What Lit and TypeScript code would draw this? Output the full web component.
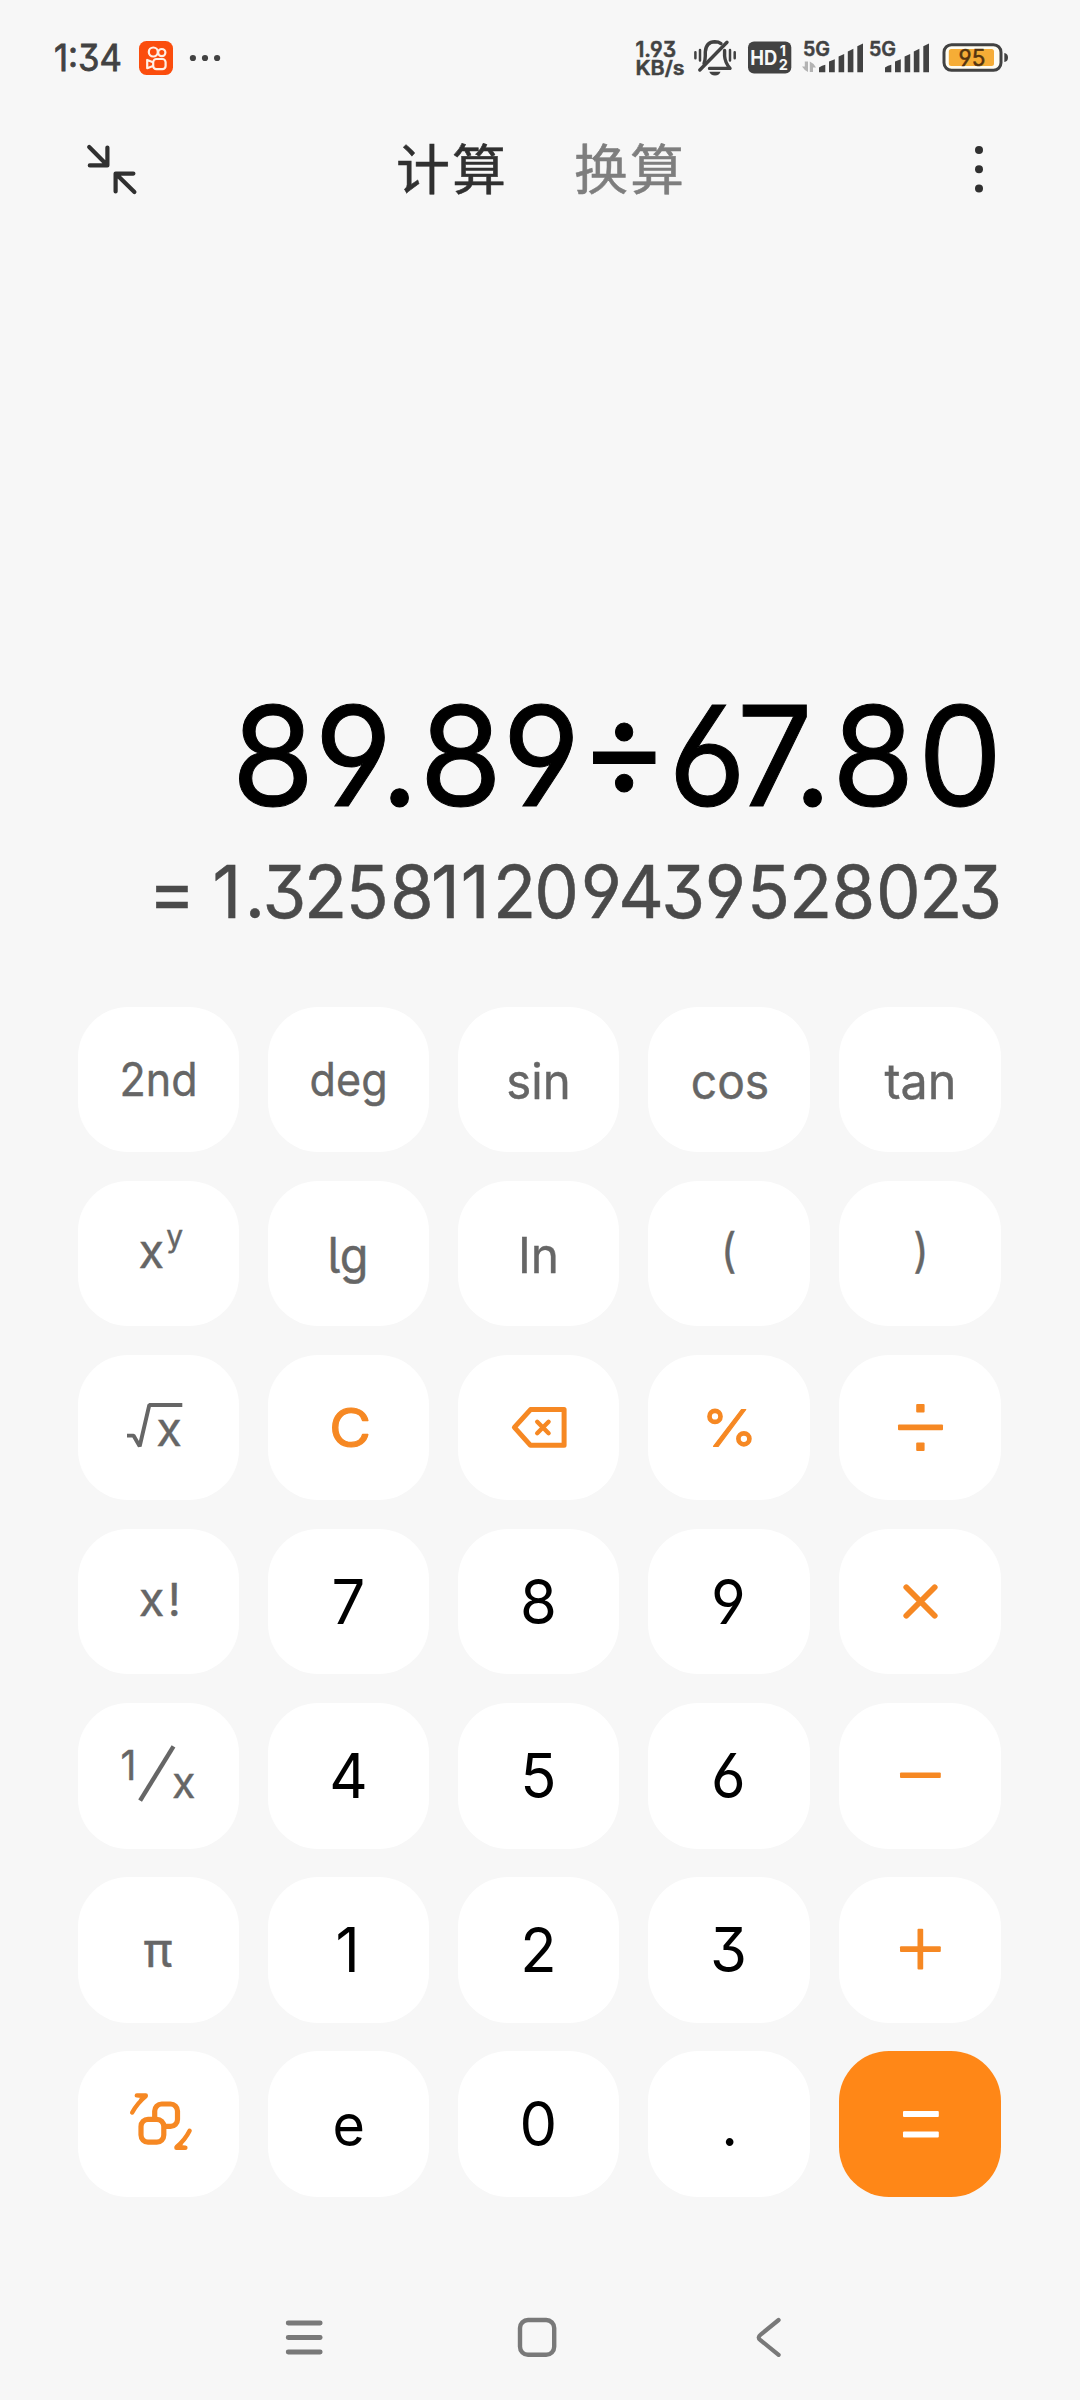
import { LitElement, html, svg, css } from "lit";
import { customElement } from "lit/decorators.js";
import { classMap } from "lit/directives/class-map.js";

/* A piece of centred key text; `w` fixes the drawn width, `sx` scales single glyphs sideways. */
const word = (t: string, size: number, y: number, w: number, x = 80.6) =>
  svg`<text class="ink" x=${x} y=${y} font-size=${size} textLength=${w} lengthAdjust="spacingAndGlyphs" text-anchor="middle">${t}</text>`;
const glyph = (t: string, size: number, y: number, x = 80.6, sx = 1) =>
  svg`<text class="ink" transform="translate(${x} ${y}) scale(${sx} 1)" font-size=${size} text-anchor="middle">${t}</text>`;
const digit = (t: string) => glyph(t, 61.5, 94.8, t === "1" ? 79.6 : 80.4, 0.97);

interface Key { name: string; kind: "fn" | "num" | "op" | "eq"; art: unknown; }

const fn = (name: string, art: unknown): Key => ({ name, kind: "fn", art });
const num = (name: string): Key => ({ name, kind: "num", art: digit(name) });
const op = (name: string, art: unknown): Key => ({ name, kind: "op", art });

const KEYS: Key[] = [
  fn("2nd", word("2nd", 46, 89, 78)),
  fn("deg", word("deg", 46, 89, 78)),
  fn("sin", word("sin", 49, 91.6, 64.5, 80.4)),
  fn("cos", word("cos", 49, 91.6, 78.5, 82)),
  fn("tan", word("tan", 49, 91.6, 72, 81.5)),

  fn("power", svg`${glyph("x", 47, 86.5, 73.3)}${glyph("y", 30, 65.6, 96.7)}`),
  fn("lg", word("lg", 49, 91.9, 41, 80)),
  fn("In", word("In", 49, 91.9, 41, 80.4)),
  fn("(", glyph("(", 47, 86, 80.8, 0.9)),
  fn(")", glyph(")", 47, 86, 82, 0.9)),

  fn("square root", svg`<path class="line" stroke-width="3.9" stroke-linejoin="bevel" d="M49 80.6H55.5L61.7 91.3 71.3 50H104.3"/>${glyph("x", 47, 90.8, 91)}`),
  op("clear", svg`<text transform="translate(82.2 91.9) scale(1.06 1)" font-size="54" text-anchor="middle" stroke="currentColor" stroke-width="1.2" stroke-linejoin="round">C</text>`),
  op("delete", svg`<g class="line" transform="translate(1 0)" stroke-linejoin="round" stroke-linecap="round"><path stroke-width="5" d="M71.5 54.6H105.1V90.3H71.5L55.4 72.4Z"/><path stroke-width="4.4" d="M78.2 66.8 89.6 78.2M89.6 66.8 78.2 78.2"/></g>`),
  op("percent", svg`<g class="line" transform="translate(1.2 0)"><circle cx="65.8" cy="61.4" r="5.5" stroke-width="4.7"/><circle cx="94.7" cy="83.8" r="5.5" stroke-width="4.7"/><path d="M92.3 54.5H96.6L69 91.3H64.3Z" fill="currentColor" stroke-width="1.2" stroke-linejoin="round"/></g>`),
  op("divide", svg`<g transform="translate(.5 0)"><rect x="58.5" y="69.5" width="45" height="5.8" rx="1"/><rect x="76.7" y="49" width="8.4" height="8.4" rx="1"/><rect x="76.7" y="87.6" width="8.4" height="8.4" rx="1"/></g>`),

  fn("factorial", svg`${glyph("x", 47, 86.7, 73.7)}${glyph("!", 45.5, 86.7, 96.2)}`),
  num("7"), num("8"), num("9"),
  op("multiply", svg`<path class="line" transform="translate(.5 0)" stroke-width="5.8" stroke-linecap="round" d="M66.8 58.3 95.2 86.7M95.2 58.3 66.8 86.7"/>`),

  fn("reciprocal", svg`${glyph("1", 41, 76.9, 50.4, 0.95)}<path class="line" stroke-width="4.4" d="M62.1 97.6 95.5 43.4"/>${glyph("x", 43, 94.6, 105.7)}`),
  num("4"), num("5"), num("6"),
  op("minus", svg`<rect x="61" y="69.4" width="40.8" height="5.7" rx="1"/>`),

  fn("pi", glyph("π", 47, 90, 80.1, 1.02)),
  num("1"), num("2"), num("3"),
  op("plus", svg`<rect x="61" y="69.3" width="40.8" height="5.7" rx="1"/><rect x="78.5" y="51.8" width="5.7" height="40.8" rx="1"/>`),

  op("switch layout", svg`<g class="line" stroke-width="5.2" stroke-linecap="round" stroke-linejoin="round">
    <rect x="63" y="68.4" width="22.8" height="22.7" rx="7"/>
    <path stroke-linecap="butt" d="M76.7 68V60a7 7 0 0 1 7-7h8.8a7 7 0 0 1 7 7v8.4a7 7 0 0 1-7 7H87"/>
    <path stroke-width="4.4" d="M54.2 61.5Q59.5 52 67.6 45.4L58.8 44.4H67.8L63 49"/>
    <path stroke-width="4.4" d="M111.6 79.8Q107 89 98.6 96L107.4 96.8H98.4L103 92.4"/></g>`),
  { name: "e", kind: "num", art: glyph("e", 58, 95.2, 80.6, 0.96) },
  num("0"),
  { name: ".", kind: "num", art: glyph(".", 61.5, 95.2, 81.6, 0.95) },
  { name: "equals", kind: "eq", art: svg`<rect x="64" y="60.1" width="35.8" height="6" rx="1"/><rect x="64" y="80.4" width="35.8" height="6" rx="1"/>` },
];

const EXPRESSION = "89.89÷67.80";
const EXPRESSION_X = [273, 353.3, 399.5, 460.7, 541.2, 624.3, 707.4, 774.7, 812.6, 873.4, 960.1];
/* The operator sits on the middle of the digits, a little above its default place. */
const EXPRESSION_Y = [...EXPRESSION].map((c) => (c === "÷" ? 796.6 : 805.6)).join(" ");
const RESULT = "1.325811209439528023";
const RESULT_X = [227, 255, 284.5, 325.5, 367.3, 411.9, 445.4, 475.2, 514.6, 556.7, 601.3, 641.1, 683.2, 725.3, 768.5, 810.6, 853.5, 898.4, 940.8, 980.1];
const STRETCH = 0.97;
const spread = (xs: number[]) => xs.map((x) => (x / STRETCH).toFixed(2)).join(" ");

const signal = (x: number) => svg`
  <path d="M${x} 72.3V67.5Q${x + 3} 65.2 ${x + 6.3} 64.8V72.3Z"/>
  <path d="M${x + 10} 72.3V61.5L${x + 15.8} 59.3V72.3Z"/>
  <path d="M${x + 19.6} 72.3V56.5L${x + 25.2} 54V72.3Z"/>
  <path d="M${x + 28.8} 72.3V51.4L${x + 34.4} 48.8V72.3Z"/>
  <path d="M${x + 38.3} 72.3V46.3L${x + 44} 43.6V72.3Z"/>`;

@customElement("app-root")
class AppRoot extends LitElement {
  static styles = css`
    :host {
      display: block;
      font-family: Inter, "Noto Sans CJK SC", sans-serif;
      font-feature-settings: "cv03", "cv04", "cv05", "cv09";
    }
    .screen {
      width: 1080px;
      height: 2400px;
      display: flex;
      flex-direction: column;
      background: #f7f7f7;
      overflow: hidden;
    }
    svg {
      display: block;
      flex: none;
      overflow: visible;
      fill: currentColor;
    }
    .line {
      fill: none;
      stroke: currentColor;
    }
    .fn .ink {
      stroke: currentColor;
      stroke-width: 0.4px;
    }
    .status {
      height: 100px;
      padding: 0 72px 0 50px;
      display: flex;
      justify-content: space-between;
      color: #424242;
    }
    .group {
      display: flex;
    }
    .bold {
      font-weight: 600;
      stroke: currentColor;
      stroke-width: 0.5px;
    }
    .header {
      height: 140px;
      padding: 0 90px 0 82px;
      display: flex;
      align-items: center;
      color: #303030;
    }
    .tabs {
      display: flex;
      gap: 66px;
      margin: 0 auto 6px 254px;
      font: 400 54px/80px "Noto Sans CJK SC", sans-serif;
      letter-spacing: 2px;
      -webkit-text-stroke: 0.5px currentColor;
    }
    .tab.idle {
      color: #7e7e7e;
    }
    .display {
      height: 767px;
      display: flex;
      flex-direction: column;
      justify-content: flex-end;
    }
    .result {
      color: #4a4a4a;
      stroke: currentColor;
      stroke-width: 0.5px;
    }
    .pad {
      display: grid;
      grid-template-columns: 161px 161px 161px 162px 162px;
      grid-auto-rows: 145.2px;
      gap: 28.9px 29px;
      margin-left: 78px;
    }
    .key {
      border-radius: 50px;
      background: #fff;
      color: #666;
    }
    .key.num {
      color: #000;
    }
    .key.op {
      color: #f68823;
    }
    .key.eq {
      background: #ff8717;
      color: #fff;
    }
    .nav {
      flex: 1;
      display: flex;
      color: #797979;
    }
  `;

  render() {
    return html`<div class="screen">
      <div class="status">
        <div class="group">
          <svg width="85" height="100" viewBox="50 0 85 100">
            <text x="54" y="71" font-size="36.5" textLength="68" lengthAdjust="spacingAndGlyphs" stroke="currentColor" stroke-width=".8">1:34</text>
          </svg>
          <svg width="45" height="100" viewBox="135 0 45 100">
            <rect x="139" y="41" width="34" height="34" rx="7.5" fill="#fb4d0d"/>
            <g fill="none" stroke="#fff1e6" stroke-width="2.2">
              <circle cx="153.3" cy="52" r="4.5"/><circle cx="161.8" cy="52.6" r="3.6"/>
              <rect x="153.2" y="59" width="12.4" height="10.2" rx="3.2"/>
              <path d="M153 62.2 147.2 60V68.2L153 66" stroke-linejoin="round"/>
            </g>
          </svg>
          <svg width="50" height="100" viewBox="180 0 50 100">
            <circle cx="192.9" cy="58" r="3.1"/><circle cx="205" cy="58" r="3.1"/><circle cx="217.1" cy="58" r="3.1"/>
          </svg>
        </div>
        <div class="group">
          <svg class="bold" width="58" height="100" viewBox="632 0 58 100">
            <text x="635.5" y="57" font-size="21" textLength="40.5" lengthAdjust="spacingAndGlyphs">1.93</text>
            <text x="635.5" y="75" font-size="19.5" textLength="49" lengthAdjust="spacingAndGlyphs">KB/s</text>
          </svg>
          <svg width="52" height="100" viewBox="690 0 52 100">
            <g class="line" stroke-width="3.4" stroke-linecap="round" stroke-linejoin="round">
              <path d="M704 63.5Q705.3 60 705.3 56V52Q706 42 714.8 41.8Q718.6 41.8 721 43.6"/>
              <path d="M724.6 50.5V56Q725 62.5 730 68.4H709.5"/>
              <path d="M727 42.2 699.8 70"/>
              <path stroke-width="2.5" d="M695.4 52.3V58.2M700 50V60.5M730 50V60.5M734.7 52.3V58.2"/>
            </g>
            <path d="M709.3 71.8H720.5Q719.5 75.4 715 75.4T709.3 71.8Z"/>
          </svg>
          <svg width="56" height="100" viewBox="742 0 56 100">
            <rect x="748" y="41.5" width="43.3" height="32" rx="6"/>
            <g fill="#f7f7f7" font-weight="700">
              <text x="750.3" y="64.6" font-size="19.5" textLength="27" lengthAdjust="spacingAndGlyphs">HD</text>
              <text x="783" y="56.2" font-size="14.5" text-anchor="middle">1</text>
              <text x="783.4" y="69.8" font-size="14.5" text-anchor="middle">2</text>
            </g>
          </svg>
          <svg width="68" height="100" viewBox="798 0 68 100">
            <text class="bold" x="803" y="56" font-size="19.5" textLength="27" lengthAdjust="spacingAndGlyphs">5G</text>
            <path fill="#b3b3b3" d="M802 66.5H804.8V61.5H808V72Q804.5 70.5 802 66.5ZM809.8 61.5Q813.5 63 816 67.5H813V72H809.8Z"/>
            ${signal(819)}
          </svg>
          <svg width="70" height="100" viewBox="866 0 70 100">
            <text class="bold" x="869" y="56" font-size="19.5" textLength="27" lengthAdjust="spacingAndGlyphs">5G</text>
            ${signal(885)}
          </svg>
          <svg width="72" height="100" viewBox="936 0 72 100">
            <rect x="944" y="44.7" width="57" height="25.6" rx="7.5" fill="#fffdf2" stroke="currentColor" stroke-width="3"/>
            <rect x="948.8" y="49" width="45.2" height="17" rx="2.5" fill="#f6ad36"/>
            <path d="M1004.3 53Q1008 53.5 1008 57.5T1004.3 62Z"/>
            <text x="972" y="65.8" font-size="22.5" text-anchor="middle" fill="#543410" stroke="#543410" stroke-width=".5">95</text>
          </svg>
        </div>
      </div>

      <div class="header">
        <svg width="60" height="60" viewBox="82 140 60 60">
          <path class="line" stroke-width="4.2" stroke-linecap="round" stroke-linejoin="round"
            d="M89.2 147 107.3 165.2M107.4 147.6V165.4H89.8M134.4 192 115.8 173.8M115.6 191.4V173.6H133.4"/>
        </svg>
        <div class="tabs"><span class="tab">计算</span><span class="tab idle">换算</span></div>
        <svg width="22" height="60" viewBox="968 140 22 60">
          <circle cx="979" cy="150" r="4"/><circle cx="979" cy="169.2" r="4"/><circle cx="979" cy="188.6" r="4"/>
        </svg>
      </div>

      <div class="display">
        <svg width="1080" height="170" viewBox="0 660 1080 170">
          <text transform="scale(${STRETCH} 1)" x=${spread(EXPRESSION_X)} y=${EXPRESSION_Y} font-size="138.5" text-anchor="middle" fill="#000" stroke="#000" stroke-width="1">${EXPRESSION}</text>
        </svg>
        <svg class="result" width="1080" height="177" viewBox="0 830 1080 177">
          <text transform="scale(${STRETCH} 1)" x=${172 / STRETCH} y="918.3" font-size="73" text-anchor="middle">=</text>
          <text transform="scale(${STRETCH} 1)" x=${spread(RESULT_X)} y="918.3" font-size="73" text-anchor="middle">${RESULT}</text>
        </svg>
      </div>

      <div class="pad">
        ${KEYS.map((k) => html`<div class=${classMap({ key: true, [k.kind]: true })}>
          <svg width="161" height="145" viewBox="0 0 161 145" role="img" aria-label=${k.name}>${k.art}</svg>
        </div>`)}
      </div>

      <div class="nav">
        <svg width="420" height="202" viewBox="0 2198 420 202">
          <path class="line" stroke-width="4.8" stroke-linecap="round" d="M288.2 2324H320.2M288.2 2338.5H320.2M288.2 2353H320.2"/>
        </svg>
        <svg width="240" height="202" viewBox="420 2198 240 202">
          <rect class="line" x="520" y="2321" width="34.2" height="34.8" rx="8" stroke-width="4.4"/>
        </svg>
        <svg width="420" height="202" viewBox="660 2198 420 202">
          <path class="line" stroke-width="4.2" stroke-linecap="round" d="M778.6 2321 760.4 2335.8Q757 2338.4 760.4 2341.1L778.6 2355.9"/>
        </svg>
      </div>
    </div>`;
  }
}
